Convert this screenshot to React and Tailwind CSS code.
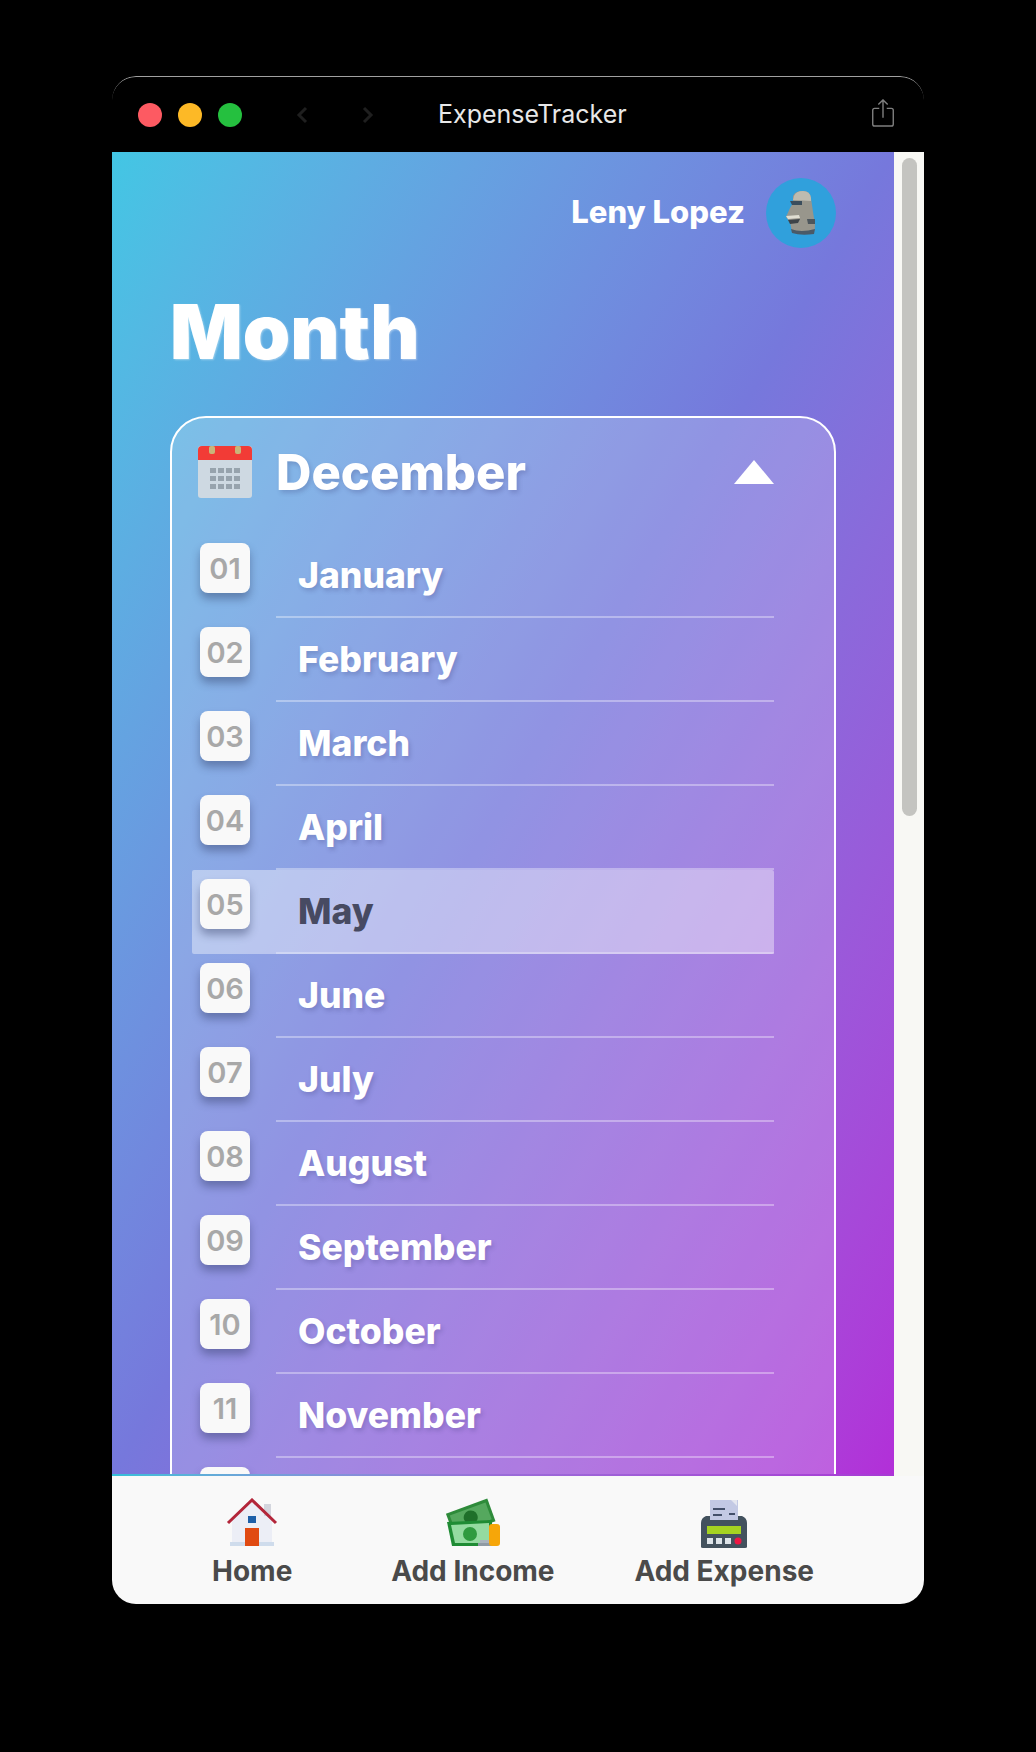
const months = ["January","February","March","April","May","June","July","August","September","October","November","December"];

function Moai() {
  return (
    <svg width="32" height="46" viewBox="0 0 32 46">
      <path d="M8 6 Q10 1 18 1 Q25 1 26 8 L28 22 L30 34 Q30 42 28 43 Q16 45 7 42 L5 32 L1 27 L5 18 L8 13 Z" fill="#98968c" />
      <path d="M9 6 Q11 1 18 1 Q25 1 26 8 L26 11 L8 10 Z" fill="#bdbbb0" />
      <path d="M5 11 L17 11 L17 15 L7 15 Z" fill="#3a4d5c" />
      <path d="M1 26 L14 25 L15 28 L3 29 Z" fill="#e0ded2" />
      <path d="M3 30 L15 29 L13 33 L5 34 Z" fill="#3e4448" />
      <path d="M22 29 L30 29 L30 34 L23 34 Z" fill="#4d565c" />
      <path d="M6 39 Q16 43 30 39 L29 44 Q16 46 7 43 Z" fill="#4a5a68" />
    </svg>
  );
}

function CalendarIcon() {
  const cells = [];
  for (let r = 0; r < 3; r++) for (let c = 0; c < 4; c++) cells.push(<rect key={r + "-" + c} x={12 + c * 8} y={22 + r * 8} width="6" height="5" fill="#97a3ad" />);
  return (
    <svg width="54" height="52" viewBox="0 0 54 52">
      <rect x="0" y="0" width="54" height="52" rx="3" fill="#ced9e2" />
      <path d="M0 14 V4 Q0 0 4 0 H50 Q54 0 54 4 V14 Z" fill="#f23b36" />
      <rect x="11" y="0" width="6" height="8" rx="2" fill="#c9b57a" />
      <rect x="37" y="0" width="6" height="8" rx="2" fill="#c9b57a" />
      {cells}
    </svg>
  );
}

function HomeIcon() {
  return (
    <svg width="52" height="52" viewBox="0 0 52 52">
      <path d="M6 22 L26 4 L46 22 V44 H6 Z" fill="#eceef6" />
      <rect x="38" y="6" width="7" height="12" fill="#d4d6de" />
      <rect x="4" y="44" width="44" height="4" fill="#cfdcec" />
      <path d="M2 25 L26 2 L50 25" fill="none" stroke="#b3263a" strokeWidth="3" />
      <rect x="22" y="18" width="8" height="7" fill="#1d5fa8" />
      <rect x="19" y="30" width="14" height="18" fill="#e04a12" />
    </svg>
  );
}

function MoneyIcon() {
  return (
    <svg width="58" height="52" viewBox="0 0 58 52">
      <g transform="rotate(-20 28 20)">
        <rect x="5" y="7" width="44" height="24" fill="#2e8b3a" />
        <rect x="8" y="10" width="38" height="18" fill="#55a85e" />
        <circle cx="27" cy="19" r="7" fill="#1f6f2a" />
      </g>
      <path d="M3 24 L48 22 L48 48 L8 48 Z" fill="#1f8c34" />
      <path d="M7 27 L45 25 L45 45 L11 45 Z" fill="#94dba0" />
      <circle cx="26" cy="36" r="7" fill="#2f9a3f" />
      <rect x="36" y="42" width="14" height="3" fill="#aab4bd" />
      <rect x="34" y="45" width="16" height="3" fill="#8f9aa4" />
      <rect x="45" y="26" width="11" height="22" rx="3" fill="#f6a609" />
    </svg>
  );
}

function CashIcon() {
  return (
    <svg width="46" height="50" viewBox="0 0 46 50">
      <rect x="9" y="0" width="28" height="20" fill="#c3c9e4" />
      <path d="M30 0 L36 0 L36 6 Z" fill="#e4e6ef" />
      <rect x="12" y="8" width="12" height="2" fill="#44506a" />
      <rect x="12" y="14" width="9" height="2" fill="#44506a" />
      <rect x="28" y="13" width="6" height="2" fill="#44506a" />
      <path d="M5 16 H9 V20 H37 V16 H41 Q46 18 46 23 V47 Q46 48 44 48 H2 Q0 48 0 47 V23 Q0 18 5 16 Z" fill="#43525e" />
      <rect x="6" y="26" width="34" height="8" fill="#a5d321" />
      <rect x="6" y="38" width="6" height="6" fill="#dfe5ea" />
      <rect x="15" y="38" width="6" height="6" fill="#dfe5ea" />
      <rect x="24" y="38" width="6" height="6" fill="#dfe5ea" />
      <circle cx="37" cy="41" r="3.5" fill="#ee1744" />
    </svg>
  );
}

function MonthRow({ num, name, active }) {
  return (
    <div className={"flex h-[84px] pl-[8px] " + (active ? "bg-white/40 rounded-[2px]" : "")}>
      <div className="pt-[9px] w-[76px] shrink-0">
        <div className="w-[50px] h-[50px] pt-[1px] rounded-[8px] bg-[#f9f9f9] flex items-center justify-center text-[29px] font-semibold text-[#a8a8a8] shadow-[0_6px_8px_rgba(40,50,90,0.4)]">{num}</div>
      </div>
      <div className={"flex-1 flex items-center pl-[22px] pt-[1px] border-b-[2px] text-[35.5px] font-extrabold " + (active ? "border-white/30 text-[#474a62]" : "border-white/35 text-white [text-shadow:2px_3px_4px_rgba(50,50,110,0.22)]")}>{name}</div>
    </div>
  );
}

function NavItem({ icon, label, className }) {
  return (
    <div className={"flex flex-col items-center " + (className || "")}>
      <div className="h-[52px] mt-[2px] flex items-end">{icon}</div>
      <div className="mt-[4px] text-[28px] leading-[34px] font-bold text-[#4a4a4a]">{label}</div>
    </div>
  );
}

export default function App() {
  return (
    <div className="w-[1036px] h-[1752px] bg-black pl-[112px] pt-[76px] overflow-hidden [font-family:Inter,'Liberation_Sans',sans-serif]">
      <div className="w-[812px] rounded-[24px] overflow-hidden">
        <div className="h-[76px] bg-black border-t-[1.5px] border-[#a0a0a0] rounded-t-[24px] flex items-center pl-[26px]">
          <div className="flex gap-[16px]">
            <div className="w-[24px] h-[24px] rounded-full bg-[#fd5a62]" />
            <div className="w-[24px] h-[24px] rounded-full bg-[#fdb926]" />
            <div className="w-[24px] h-[24px] rounded-full bg-[#25c03f]" />
          </div>
          <div className="flex ml-[53px] gap-[52px]">
            <svg width="14" height="20" viewBox="0 0 14 20" fill="none" stroke="#1f1f1f" strokeWidth="3"><path d="M11 3 L4 10 L11 17" /></svg>
            <svg width="14" height="20" viewBox="0 0 14 20" fill="none" stroke="#1f1f1f" strokeWidth="3"><path d="M3 3 L10 10 L3 17" /></svg>
          </div>
          <div className="ml-[63px] text-[25px] text-[#e8e8e8]">ExpenseTracker</div>
          <svg className="ml-auto mr-[29px] -mt-[3px]" width="24" height="28" viewBox="0 0 24 30" fill="none" stroke="#7f7f7f" strokeWidth="1.5"><path d="M8 10 H3 Q1 10 1 12 V27 Q1 29 3 29 H21 Q23 29 23 27 V12 Q23 10 21 10 H16" /><path d="M12 20 V1 M7 6 L12 1 L17 6" /></svg>
        </div>
        <div className="h-[1324px] flex overflow-hidden">
          <div className="relative w-[782px] shrink-0 bg-linear-to-br from-[#42c6e4] via-[#7678dc] to-[#b22fd8] pl-[58px] pr-[58px] overflow-hidden">
            <div className="h-[105px] pt-[26px] flex justify-end items-start gap-[21px]">
              <div className="h-[68px] flex items-center text-[31px] font-extrabold text-white">Leny Lopez</div>
              <div className="w-[70px] h-[70px] rounded-full bg-[#30a0dc] flex items-center justify-center"><Moai /></div>
            </div>
            <h1 className="h-[159px] pt-[30px] text-[76px] leading-[88px] font-black text-white [text-shadow:1px_1px_2px_rgba(255,255,255,0.4)]">Month</h1>
            <div className="w-[666px] rounded-[36px] border-2 border-white bg-white/20 pl-[20px] pr-[60px] pt-[26px] h-[1100px]">
              <div className="h-[64px] flex items-center mb-[26px]">
                <div className="ml-[6px] mb-[8px]"><CalendarIcon /></div>
                <div className="ml-[24px] mb-[6px] text-[49px] font-extrabold text-white [text-shadow:2px_3px_4px_rgba(50,50,110,0.22)]">December</div>
                <div className="ml-auto mb-[9px] w-0 h-0 border-l-[20px] border-r-[20px] border-b-[24px] border-l-transparent border-r-transparent border-b-white" />
              </div>
              {months.map((m, i) => (
                <MonthRow key={m} num={String(i + 1).padStart(2, "0")} name={m} active={m === "May"} />
              ))}
            </div>
            <div className="absolute left-0 right-0 bottom-0 h-[2px] bg-linear-to-r from-[#32bfd8] via-[#9a6cd8] to-[#a838d4]" />
          </div>
          <div className="flex-1 bg-[#f8f8f4] px-[8px] pt-[6px]">
            <div className="w-[15px] h-[658px] rounded-full bg-[#c4c4c0]" />
          </div>
        </div>
        <div className="h-[128px] bg-[#f9f9f9] rounded-b-[20px] flex justify-between pl-[100px] pr-[110px] pt-[20px]">
          <NavItem icon={<HomeIcon />} label="Home" />
          <NavItem icon={<MoneyIcon />} label="Add Income" className="ml-[19px]" />
          <NavItem icon={<CashIcon />} label="Add Expense" />
        </div>
      </div>
    </div>
  );
}
